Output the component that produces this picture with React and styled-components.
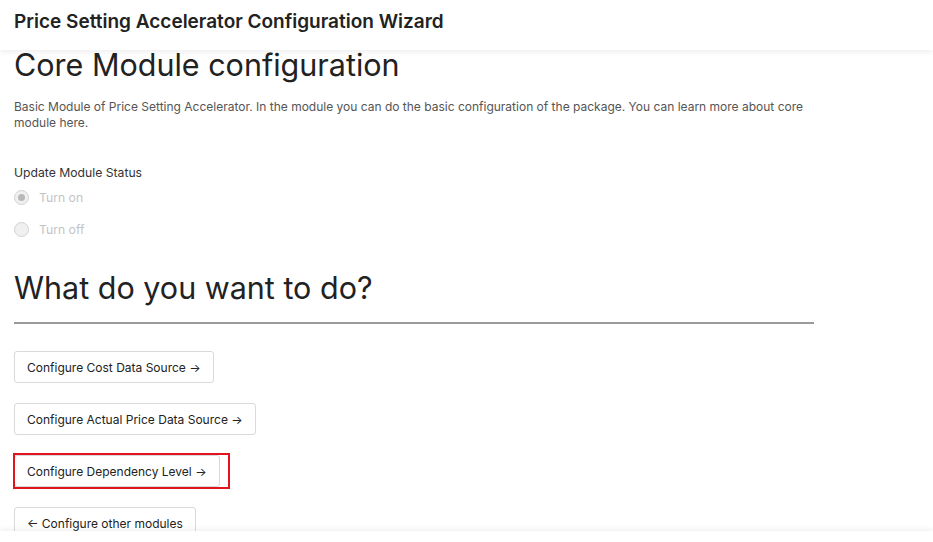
import React from "react"
import styled, { createGlobalStyle } from "styled-components"

const GlobalStyle = createGlobalStyle`
  body {
    margin: 0;
    background: #fff;
    font-family: Inter, "Noto Sans", sans-serif;
    color: #222;
  }
`

const Header = styled.header`
  height: 50px;
  box-sizing: border-box;
  display: flex;
  align-items: center;
  padding: 0 14px 7px;
  background: #fff;
  box-shadow: 0 2px 6px rgba(0, 0, 0, 0.07);
  position: relative;
  z-index: 2;
`

const AppTitle = styled.h1`
  margin: 0;
  font-size: 19px;
  font-weight: 600;
  color: #222;
`

const Main = styled.main`
  width: 800px;
  padding: 0 14px;
`

const PageTitle = styled.h2`
  margin: ${props => props.top}px 0 0;
  font-size: 30.5px;
  font-weight: 400;
  line-height: 30px;
  color: #222;
`

const Intro = styled.p`
  margin: 19px 0 0;
  font-size: 12px;
  line-height: 16px;
  color: #555;
`

const FieldLabel = styled.div`
  margin-top: 34px;
  font-size: 12.2px;
  line-height: 16px;
  color: #333;
`

const RadioRow = styled.label`
  display: flex;
  align-items: center;
  gap: 10px;
  height: 32px;
  font-size: 12.2px;
  color: #c4c4c4;
`

const RadioDot = styled.span`
  width: 15px;
  height: 15px;
  box-sizing: border-box;
  border-radius: 50%;
  border: 1px solid #d2d2d2;
  background: #f0f0f0;
  display: flex;
  align-items: center;
  justify-content: center;

  &::after {
    content: "";
    width: 7px;
    height: 7px;
    border-radius: 50%;
    background: ${props => (props.checked ? "#b8b8b8" : "transparent")};
  }
`

const Divider = styled.hr`
  margin: 19px 0 0;
  border: 0;
  height: 2px;
  background: #9a9a9a;
`

const Actions = styled.div`
  margin-top: 27px;
  display: flex;
  flex-direction: column;
  align-items: flex-start;
  gap: 20px;
  padding-bottom: 40px;
`

const Highlight = styled.div`
  position: relative;

  &::after {
    content: "";
    position: absolute;
    top: -2px;
    left: -1px;
    right: -10px;
    bottom: -2px;
    border: 2px solid #e3141f;
    pointer-events: none;
  }
`

const ActionButton = styled.button`
  height: 32px;
  padding: 0 12px;
  background: #fff;
  border: 1px solid #d9d9d9;
  border-radius: 3px;
  font-family: Inter, "Noto Sans", sans-serif;
  font-size: 12px;
  color: #222;
  cursor: pointer;
`

const Footer = styled.div`
  position: fixed;
  left: 0;
  right: 0;
  bottom: 0;
  height: 11px;
  background: #fff;
  box-shadow: 0 -2px 5px rgba(0, 0, 0, 0.06);
`

export default function App() {
  return (
    <>
      <GlobalStyle />
      <Header>
        <AppTitle>Price Setting Accelerator Configuration Wizard</AppTitle>
      </Header>
      <Main>
        <PageTitle top={0}>Core Module configuration</PageTitle>
        <Intro>
          Basic Module of Price Setting Accelerator. In the module you can do the basic configuration of the
          package. You can learn more about core module here.
        </Intro>
        <FieldLabel>Update Module Status</FieldLabel>
        <RadioRow>
          <RadioDot checked />
          Turn on
        </RadioRow>
        <RadioRow>
          <RadioDot />
          Turn off
        </RadioRow>
        <PageTitle top={28}>What do you want to do?</PageTitle>
        <Divider />
        <Actions>
          <ActionButton>Configure Cost Data Source →</ActionButton>
          <ActionButton>Configure Actual Price Data Source →</ActionButton>
          <Highlight>
            <ActionButton>Configure Dependency Level →</ActionButton>
          </Highlight>
          <ActionButton>← Configure other modules</ActionButton>
        </Actions>
      </Main>
      <Footer />
    </>
  )
}
